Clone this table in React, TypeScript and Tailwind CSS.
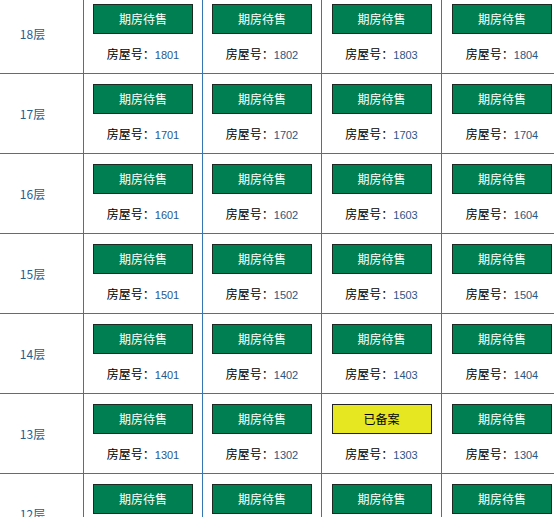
const floors = [18, 17, 16, 15, 14, 13, 12];
const widths = ["w-[119px]", "w-[119px]", "w-[120px]", "w-[121px]"];

function Unit({ no, done }: { no: string; done?: boolean }) {
  return (
    <div className="flex flex-col items-center pt-[10px]">
      <div
        className={
          done
            ? "w-[100px] h-[30px] border border-[#222] bg-[#e6e621] text-black flex items-center justify-center text-[12px]"
            : "w-[100px] h-[30px] border border-[#1c2b22] bg-[#008052] text-white flex items-center justify-center text-[12px]"
        }
      >
        {done ? "已备案" : "期房待售"}
      </div>
      <div className="mt-[14px] leading-[12px] text-[12px] text-black whitespace-nowrap">
        房屋号：
        <span className="text-[#2a5785] text-[11px] font-['Liberation_Sans',sans-serif]">{no}</span>
      </div>
    </div>
  );
}

export default function App() {
  return (
    <div
      className="w-[554px] h-[517px] overflow-hidden bg-white"
      style={{ fontFamily: '"Noto Sans CJK SC", "Liberation Sans", sans-serif' }}
    >
      <div className="-mt-[6px] flex flex-col">
        {floors.map((f) => (
          <div key={f} className="flex h-[80px] border-b border-[#3577b3] w-[600px]">
            <div className="w-[83px] shrink-0 flex items-center justify-center pr-[18px] text-[12px] text-[#245d8f]">
              {f}层
            </div>
            {[1, 2, 3, 4].map((u, i) => (
              <div key={u} className={`${widths[i]} shrink-0 border-l border-[#3577b3]`}>
                <Unit no={`${f}0${u}`} done={f === 13 && u === 3} />
              </div>
            ))}
          </div>
        ))}
      </div>
    </div>
  );
}
